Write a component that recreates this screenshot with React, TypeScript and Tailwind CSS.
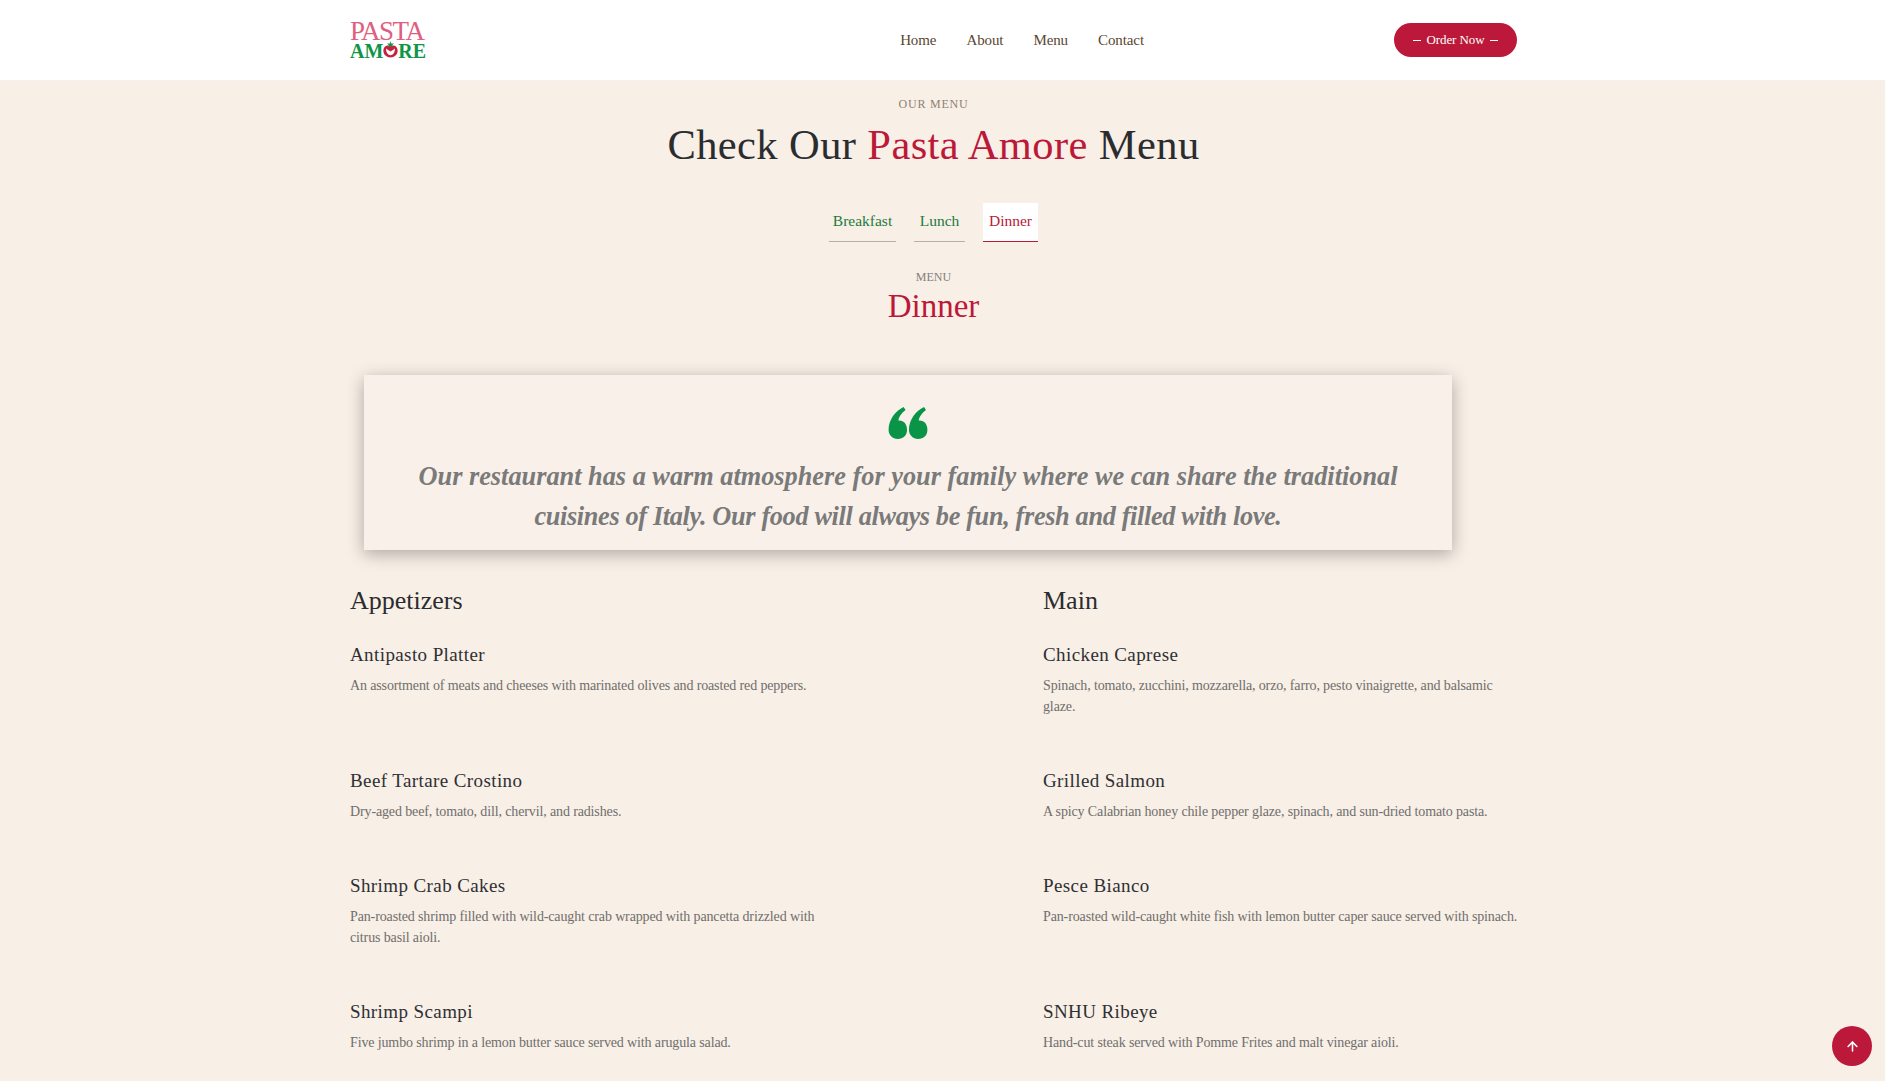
import React from "react";
import { ArrowUp } from "lucide-react";

const serif = "font-['Liberation_Serif',serif]";

function Item({ name, desc }: { name: string; desc: string }) {
  return (
    <div className="w-[478px] pb-[49px]">
      <h4 className="text-[19px] font-normal leading-[30px] tracking-[0.4px] text-[#2f3034]">{name}</h4>
      <p className="mt-[5px] text-[14px] leading-[21px] tracking-[-0.13px] text-[#6f6e6c]">{desc}</p>
    </div>
  );
}

function Logo() {
  return (
    <div className="flex w-[78px] flex-col items-start">
      <span className="text-[27px] leading-[20px] tracking-[-1.5px] text-[#df5f7f]">PASTA</span>
      <div className="mt-[1px] flex h-[17px] items-end text-[20px] font-bold leading-[16px] text-[#0f9448]">
        <span>AM</span>
        <svg viewBox="0 0 20 22" className="h-[19px] w-[15px]">
          <path d="M10 6.500c5-2.500 9.500.5 9.500 6.500 0 5-4.500 8.500-9.500 8.500S.5 18 .5 13c0-6 4.500-9 9.500-6.500z" fill="#c8203f" />
          <path d="M4 9.500c0 5 2.500 9 6 9s6-4 6-9c-1.500 1-4 3-6 4-2-1-4.500-3-6-4z" fill="#fff" />
          <path d="M10 0l1.300 3.200 3.200-.4-2.200 2.500 1 2.700L10 6.300 6.700 8l1-2.700-2.200-2.500 3.200.4z" fill="#0f9448" />
        </svg>
        <span>RE</span>
      </div>
    </div>
  );
}

const tabs = [
  { t: "Breakfast", w: "w-[67px]" },
  { t: "Lunch", w: "w-[51px]" },
];

export default function App() {
  return (
    <div className={`relative h-[1081px] overflow-hidden bg-[#f8efe6] pr-[18px] ${serif}`}>
      <header className="-mr-[18px] h-[81px] border-b border-[#f1f0ee] bg-white pr-[18px]">
        <div className="mx-auto flex h-[80px] w-[1167px] items-center">
          <Logo />
          <nav className="ml-auto flex gap-[30px] text-[15px] tracking-[-0.1px] text-[#5a4632]">
            <span>Home</span>
            <span>About</span>
            <span>Menu</span>
            <span>Contact</span>
          </nav>
          <button className="ml-[250px] flex h-[34px] w-[123px] items-center justify-center gap-[6px] rounded-full bg-[#bc1839] text-[13px] tracking-[-0.1px] text-white">
            <span className="h-px w-[8px] bg-white" />
            Order Now
            <span className="h-px w-[8px] bg-white" />
          </button>
        </div>
      </header>

      <main className="mx-auto w-[1167px]">
        <p className="mt-[15px] text-center text-[12px] leading-[16px] tracking-[0.8px] text-[#8f8172]">OUR MENU</p>
        <h2 className="mt-[6px] text-center text-[42.500px] font-normal leading-[54px] tracking-[0.4px] text-[#2b2c30]">
          Check Our <span className="text-[#bc1839]">Pasta Amore</span> Menu
        </h2>
        <div className="mt-[31px] flex h-[39px] justify-center gap-[18px] text-[15.500px]">
          {tabs.map((x) => (
            <div key={x.t} className={`${x.w} flex items-center justify-center border-b border-[#b5b1ac] pb-[3px] text-[#1d7a42]`}>
              {x.t}
            </div>
          ))}
          <div className="flex w-[55px] items-center justify-center border-b border-[#bc1839] bg-white pb-[3px] text-[#bc1839]">
            Dinner
          </div>
        </div>
        <p className="mt-[27px] text-center text-[12px] leading-[16px] text-[#84807c]">MENU</p>
        <h3 className="mt-[1px] text-center text-[33px] font-normal leading-[40px] text-[#bc1839]">Dinner</h3>

        <section className="ml-[14px] mt-[49px] h-[175px] w-[1088px] bg-[#f9f1e9] pt-[32px] text-center shadow-[0_4px_16px_rgba(0,0,0,0.3)]">
          <svg viewBox="0 0 40 34" className="mx-auto h-[33px] w-[40px]">
            <path fill="#0a9447" d="M9.500 33C4 33 0 29 0 23.500 0 13 7 4 15.500 0l2 3C13 6.500 10.500 10 10 14c5.500-.5 9 3.500 9 9.500S15 33 9.500 33z" />
            <path fill="#0a9447" d="M30.500 33C25 33 21 29 21 23.500 21 13 28 4 36.500 0l2 3C34 6.500 31.500 10 31 14c5.500-.5 9 3.500 9 9.500S36 33 30.500 33z" />
          </svg>
          <p className="mt-[17px] text-[26.300px] font-bold italic leading-[40px] text-[#7a7a7a]">
            Our restaurant has a warm atmosphere for your family where we can share the traditional
            <br />
            <span className="tracking-[-0.35px]">cuisines of Italy. Our food will always be fun, fresh and filled with love.</span>
          </p>
        </section>

        <div className="mt-[31px] grid grid-cols-[693px_1fr]">
          <h3 className="text-[26px] font-normal leading-[40px] text-[#2b2c30]">Appetizers</h3>
          <h3 className="text-[26px] font-normal leading-[40px] text-[#2b2c30]">Main</h3>
          <div className="col-span-2 h-[19px]" />
          <Item name="Antipasto Platter" desc="An assortment of meats and cheeses with marinated olives and roasted red peppers." />
          <Item name="Chicken Caprese" desc="Spinach, tomato, zucchini, mozzarella, orzo, farro, pesto vinaigrette, and balsamic glaze." />
          <Item name="Beef Tartare Crostino" desc="Dry-aged beef, tomato, dill, chervil, and radishes." />
          <Item name="Grilled Salmon" desc="A spicy Calabrian honey chile pepper glaze, spinach, and sun-dried tomato pasta." />
          <Item name="Shrimp Crab Cakes" desc="Pan-roasted shrimp filled with wild-caught crab wrapped with pancetta drizzled with citrus basil aioli." />
          <Item name="Pesce Bianco" desc="Pan-roasted wild-caught white fish with lemon butter caper sauce served with spinach." />
          <Item name="Shrimp Scampi" desc="Five jumbo shrimp in a lemon butter sauce served with arugula salad." />
          <Item name="SNHU Ribeye" desc="Hand-cut steak served with Pomme Frites and malt vinegar aioli." />
        </div>
      </main>

      <div className="absolute bottom-[15px] right-[13px] flex h-[40px] w-[40px] items-center justify-center rounded-full bg-[#bc1839] text-white">
        <ArrowUp size={15} strokeWidth={2.500} />
      </div>
    </div>
  );
}
